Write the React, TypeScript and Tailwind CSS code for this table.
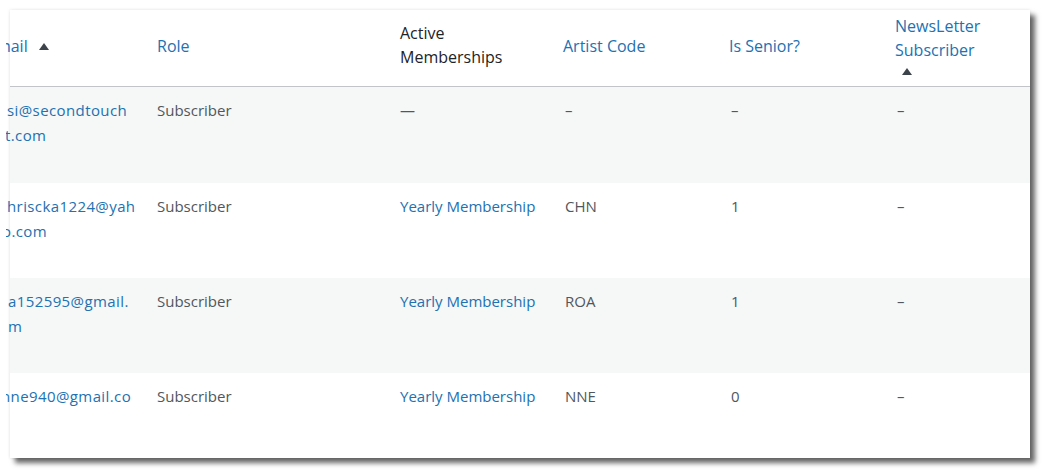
const SortUp = () => (
  <svg width="10" height="7" viewBox="0 0 10 7" aria-hidden="true">
    <path d="M5 0L10 7H0Z" fill="#3c434a" />
  </svg>
);

type Line = { text: string; shift: string };

type Row = {
  email: Line[];
  membership: string | null;
  code: string;
  senior: string;
  height: string;
  striped: boolean;
};

const rows: Row[] = [
  {
    email: [
      { text: "si@secondtouch", shift: "ml-[1px]" },
      { text: "t.com", shift: "-ml-[1px]" },
    ],
    membership: null,
    code: "–",
    senior: "–",
    height: "h-[96px]",
    striped: true,
  },
  {
    email: [
      { text: "hriscka1224@yah", shift: "ml-[1px]" },
      { text: "o.com", shift: "-ml-[4px]" },
    ],
    membership: "Yearly Membership",
    code: "CHN",
    senior: "1",
    height: "h-[95px]",
    striped: false,
  },
  {
    email: [
      { text: "a152595@gmail.", shift: "ml-[2px]" },
      { text: "m", shift: "ml-[2px]" },
    ],
    membership: "Yearly Membership",
    code: "ROA",
    senior: "1",
    height: "h-[95px]",
    striped: true,
  },
  {
    email: [{ text: "nne940@gmail.co", shift: "-ml-[5px]" }],
    membership: "Yearly Membership",
    code: "NNE",
    senior: "0",
    height: "h-[85px]",
    striped: false,
  },
];

const cols = "grid grid-cols-[137px_243px_163px_166px_166px_145px]";

export default function App() {
  return (
    <div className="min-h-[470px] bg-white p-[10px] font-['Open_Sans',sans-serif]">
      <div className="h-[448px] w-[1020px] bg-white shadow-[5px_5px_5px_rgba(0,0,0,0.6),0_0_3px_rgba(0,0,0,0.12)]">
        <div className={`${cols} h-[77px] border-b border-[#c3c4c7] text-[16px] leading-[24px]`}>
          <div className="-ml-[4px] overflow-hidden pt-[24px]">
            <div className="flex items-center whitespace-nowrap text-[#2271b1]">
              <span className="-ml-[19px]">Email</span>
              <span className="ml-[11px]">
                <SortUp />
              </span>
            </div>
          </div>
          <div className="px-[10px] pt-[24px] text-[#2271b1]">Role</div>
          <div className="px-[10px] pt-[11px] text-[#1d2327]">
            Active
            <br />
            Memberships
          </div>
          <div className="px-[10px] pt-[24px] text-[#2271b1]">Artist Code</div>
          <div className="px-[10px] pt-[24px] text-[#2271b1]">Is Senior?</div>
          <div className="px-[10px] pt-[4px] text-[#2271b1]">
            NewsLetter
            <br />
            Subscriber
            <div className="ml-[7px] mt-[6px]">
              <SortUp />
            </div>
          </div>
        </div>

        {rows.map((row, i) => (
          <div
            key={i}
            className={`${cols} ${row.height} ${row.striped ? "bg-[#f6f7f7]" : "bg-white"} text-[15px] leading-[25px] text-[#50575e]`}
          >
            <div className="-ml-[4px] overflow-hidden pt-[11px] text-[#2271b1]">
              {row.email.map((line, j) => (
                <div key={j} className={`whitespace-nowrap tracking-[0.4px] ${line.shift}`}>
                  {line.text}
                </div>
              ))}
            </div>
            <div className="px-[10px] pt-[11px]">Subscriber</div>
            <div className="px-[10px] pt-[11px]">
              {row.membership ? (
                <span className="text-[#2271b1]">{row.membership}</span>
              ) : (
                "—"
              )}
            </div>
            <div className="pl-[12px] pr-[10px] pt-[11px]">{row.code}</div>
            <div className="pl-[12px] pr-[10px] pt-[11px]">{row.senior}</div>
            <div className="pl-[12px] pr-[10px] pt-[11px]">–</div>
          </div>
        ))}
      </div>
    </div>
  );
}
